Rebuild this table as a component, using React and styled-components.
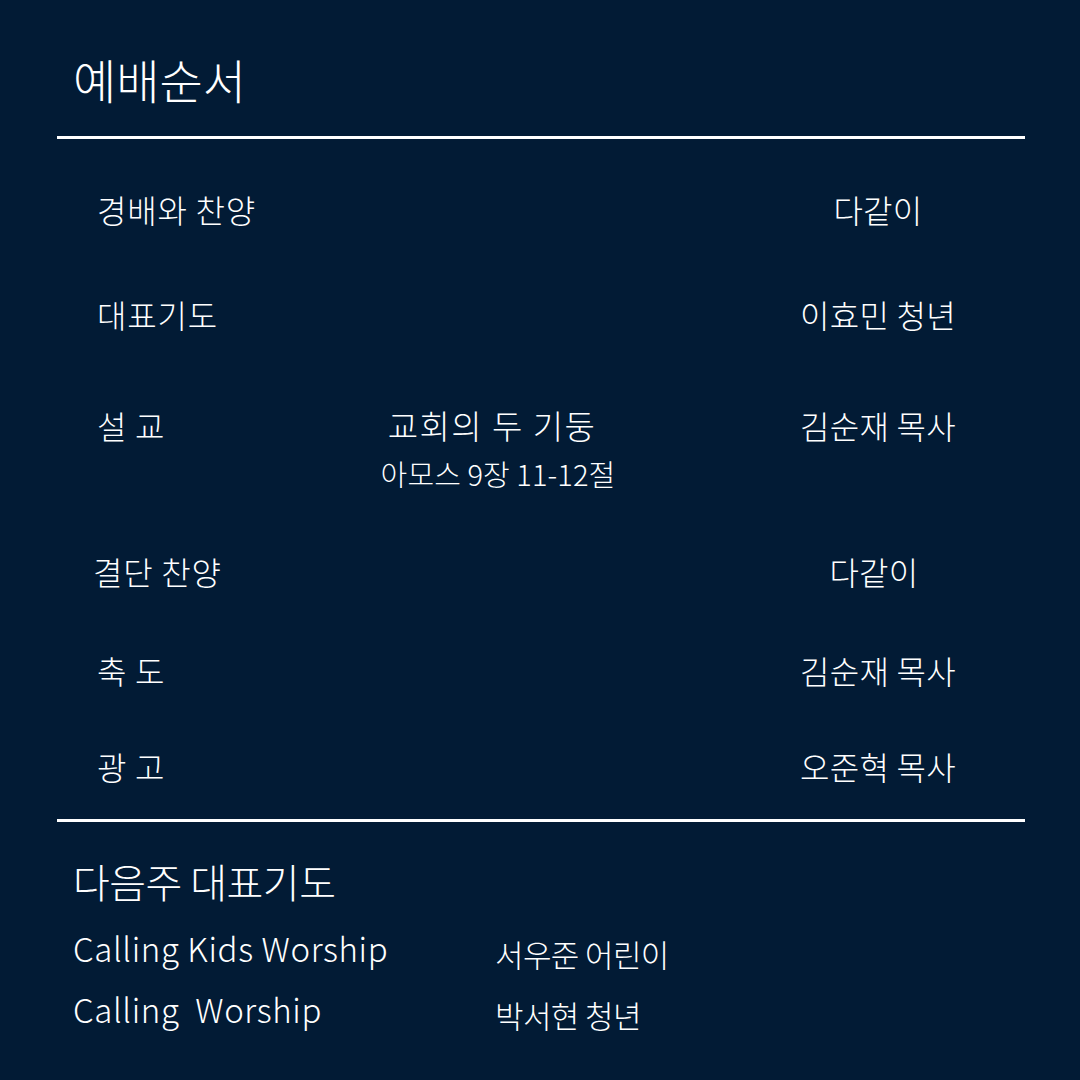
import React from 'react';
import styled, { createGlobalStyle } from 'styled-components';

const GlobalStyle = createGlobalStyle`
  html, body {
    margin: 0;
    padding: 0;
    background: #021b35;
  }
  body {
    font-family: 'Noto Sans CJK KR', 'Noto Sans', sans-serif;
    font-weight: 300;
    color: #ffffff;
  }
`;

const Page = styled.div`
  width: 1080px;
  height: 1080px;
  background: #021b35;
  padding: 0 55px 0 57px;
  box-sizing: border-box;
  overflow: hidden;
`;

const Title = styled.h1`
  margin: 0;
  padding: 48px 0 0 16px;
  height: 136px;
  box-sizing: border-box;
  font-size: 47px;
  line-height: 62px;
  font-weight: 300;
  letter-spacing: 0;
`;

const Rule = styled.div`
  height: 3px;
  background: #ffffff;
`;

const Order = styled.div`
  padding: 50px 22px 33px 40px;
`;

const Row = styled.div`
  display: grid;
  grid-template-columns: 240px 316px 1fr;
  align-items: start;
  height: ${(p) => p.$h}px;
`;

const Label = styled.div`
  font-size: 32px;
  line-height: 40px;
  letter-spacing: 0.8px;
  margin-left: ${(p) => p.$nudge || 0}px;
`;

const Middle = styled.div`
  display: flex;
  flex-direction: column;
  align-items: center;
`;

const Sermon = styled.div`
  font-size: 33px;
  line-height: 40px;
  letter-spacing: 1.5px;
  transform: translateX(-3px);
`;

const Scripture = styled.div`
  margin-top: 10px;
  font-size: 29px;
  line-height: 36px;
  letter-spacing: 0.1px;
  transform: translateX(3px);
`;

const Leader = styled.div`
  justify-self: end;
  width: 250px;
  text-align: center;
  font-size: 32px;
  line-height: 40px;
  letter-spacing: 0.3px;
  transform: translateX(${(p) => p.$nudge || 0}px);
`;

const NextTitle = styled.h2`
  margin: 0;
  padding: 34px 0 0 16px;
  font-size: 40px;
  line-height: 50px;
  font-weight: 300;
  letter-spacing: -0.5px;
`;

const NextList = styled.div`
  display: grid;
  grid-template-columns: 422px 1fr;
  row-gap: 15px;
  padding: 22px 0 0 16px;
`;

const Ministry = styled.div`
  font-size: 33px;
  line-height: 40px;
  letter-spacing: 0.6px;
  white-space: pre;
`;

const Person = styled.div`
  font-size: 31px;
  line-height: 40px;
  letter-spacing: -0.6px;
  padding-top: 6px;
`;

const order = [
  { label: '경배와 찬양', leader: '다같이', h: 105 },
  { label: '대표기도', leader: '이효민 청년', h: 111 },
  { label: '설 교', leader: '김순재 목사', h: 146, sermon: true },
  { label: '결단 찬양', leader: '다같이', h: 99, nudge: -4 },
  { label: '축 도', leader: '김순재 목사', h: 96 },
  { label: '광 고', leader: '오준혁 목사', h: 40 },
];

const next = [
  { ministry: 'Calling Kids Worship', person: '서우준 어린이' },
  { ministry: 'Calling  Worship', person: '박서현 청년' },
];

export default function App() {
  return (
    <Page>
      <GlobalStyle />
      <Title>예배순서</Title>
      <Rule />
      <Order>
        {order.map((item) => (
          <Row key={item.label + item.leader} $h={item.h}>
            <Label $nudge={item.nudge}>{item.label}</Label>
            <Middle>
              {item.sermon && (
                <>
                  <Sermon>교회의 두 기둥</Sermon>
                  <Scripture>아모스 9장 11-12절</Scripture>
                </>
              )}
            </Middle>
            <Leader $nudge={item.nudge}>{item.leader}</Leader>
          </Row>
        ))}
      </Order>
      <Rule />
      <NextTitle>다음주 대표기도</NextTitle>
      <NextList>
        {next.map((n) => (
          <React.Fragment key={n.ministry}>
            <Ministry>{n.ministry}</Ministry>
            <Person>{n.person}</Person>
          </React.Fragment>
        ))}
      </NextList>
    </Page>
  );
}
